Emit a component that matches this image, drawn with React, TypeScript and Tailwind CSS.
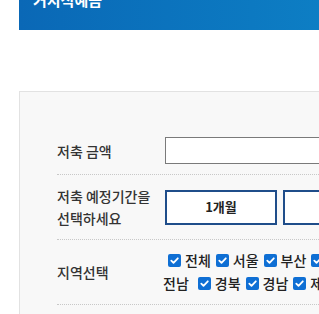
import React from "react";

const regionsLine1 = ["전체", "서울", "부산"];
const regionsLine2 = ["경북", "경남", "제주"];

function Check() {
  return (
    <span className="inline-flex h-[13px] w-[13px] shrink-0 items-center justify-center rounded-[2px] bg-[#0f6fd4]">
      <svg width="11" height="11" viewBox="0 0 11 11" fill="none">
        <path d="M2.3 5.6 L4.5 7.8 L8.8 3.3" stroke="#fff" strokeWidth="1.8" strokeLinecap="round" strokeLinejoin="round" />
      </svg>
    </span>
  );
}

function Item({ label }: { label: string }) {
  return (
    <span className="inline-flex items-center mr-[5px]">
      <Check />
      <span className="ml-[4px]">{label}</span>
    </span>
  );
}

export default function App() {
  return (
    <div
      className="relative h-[314px] w-[319px] overflow-hidden bg-white text-[#333]"
      style={{ fontFamily: '"Noto Sans CJK KR", "Noto Sans", sans-serif' }}
    >
      <div className="w-[700px]">
        <div className="ml-[19px] flex h-[30px] items-start bg-gradient-to-r from-[#0a68b6] to-[#159ad6] pl-[14px]">
          <div className="mt-[-8px] text-[15px] font-bold leading-[15px] text-white">거치식예금</div>
        </div>
        <div className="ml-[19px] mt-[61px] h-[400px] border border-[#e2e2e2] bg-[#f8f8f8] pl-[37px] pt-[35px]">
          <div className="flex items-center border-b border-dotted border-[#c8c8c8] py-[10px]">
            <div className="w-[108px] text-[14px] font-medium leading-[20px]">저축 금액</div>
            <div className="h-[27px] w-[320px] border border-[#7a7a7a] bg-white" />
          </div>
          <div className="flex items-center border-b border-dotted border-[#c8c8c8] py-[10px]">
            <div className="w-[108px] text-[14px] font-medium leading-[22px]">
              저축 예정기간을
              <br />
              선택하세요
            </div>
            <div className="flex gap-[6px]">
              <div className="flex h-[35px] w-[112px] items-center justify-center border-2 border-[#1f4d8a] bg-white text-[13px] font-bold text-[#222]">
                1개월
              </div>
              <div className="flex h-[35px] w-[112px] items-center justify-center border-2 border-[#1f4d8a] bg-white text-[13px] font-bold text-[#222]">
                3개월
              </div>
            </div>
          </div>
          <div className="flex items-center border-b border-dotted border-[#c8c8c8] py-[9px]">
            <div className="w-[108px] text-[14px] font-medium leading-[20px]">지역선택</div>
            <div className="text-[14px] font-medium leading-[23px] text-[#222]">
              <div className="flex items-center whitespace-nowrap pl-[3px]">
                {regionsLine1.map((r) => (
                  <Item key={r} label={r} />
                ))}
                <Check />
              </div>
              <div className="ml-[-2px] flex items-center whitespace-nowrap">
                <span className="mr-[9px]">전남</span>
                {regionsLine2.map((r) => (
                  <Item key={r} label={r} />
                ))}
              </div>
            </div>
          </div>
        </div>
      </div>
    </div>
  );
}
